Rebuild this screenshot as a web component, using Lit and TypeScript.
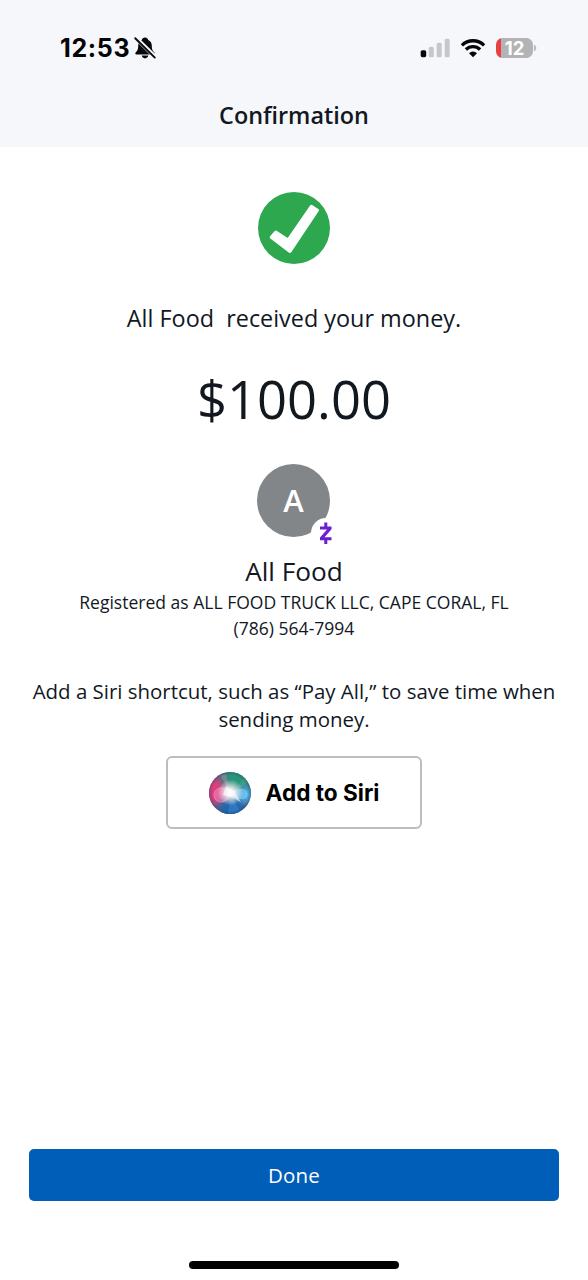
import { LitElement, html, css } from "lit";
import { customElement, property } from "lit/decorators.js";

@customElement("status-bar")
class StatusBar extends LitElement {
  @property() time = "12:53";
  @property() battery = "12";

  static styles = css`
    :host {
      display: flex;
      justify-content: space-between;
      align-items: center;
      height: 96px;
      padding: 0 51px 0 60px;
      box-sizing: border-box;
      font-family: Inter, "Liberation Sans", sans-serif;
    }
    .left,
    .right {
      display: flex;
      align-items: center;
    }
    .time {
      font-size: 25px;
      line-height: 32px;
      font-weight: 750;
      letter-spacing: 0.65px;
      color: #050507;
    }
    .bell {
      margin-left: 3px;
    }
    .wifi {
      margin-left: 10px;
    }
    .battery {
      display: flex;
      align-items: center;
      margin-left: 10px;
    }
    .cell {
      width: 37px;
      height: 20px;
      border-radius: 6.5px;
      background: linear-gradient(90deg, #e9403f 0 5px, #b3b3b5 5px);
      color: #fff;
      font-size: 18.5px;
      line-height: 20px;
      font-weight: 750;
      text-align: center;
    }
    svg {
      display: block;
    }
  `;

  render() {
    return html`
      <div class="left">
        <span class="time">${this.time}</span>
        <svg class="bell" width="24" height="24" viewBox="0 0 24 24">
          <path
            d="M12 1.6c-1.7 0-2.9 1-3.2 2.3C6.300 4.900 5.200 7.100 5.200 9.700c0 3.900-1 5.100-2.400 6.500-.9.900-.6 2.300.8 2.300h16.800c1.400 0 1.700-1.400.8-2.300-1.400-1.400-2.400-2.600-2.400-6.500 0-2.600-1.100-4.800-3.600-5.800C14.900 2.600 13.700 1.600 12 1.600z"
            fill="#08080a"
          />
          <path d="M8.800 19.600h6.400c-.2 1.700-1.500 2.800-3.200 2.800s-3-1.100-3.200-2.800z" fill="#08080a" />
          <path d="M2.700 1.800L22.500 21.300" stroke="#f5f7fb" stroke-width="4.200" />
          <path d="M2.200 2.200L21.800 21.600" stroke="#08080a" stroke-width="1.900" stroke-linecap="round" />
        </svg>
      </div>
      <div class="right">
        <svg width="30" height="20" viewBox="0 0 30 20">
          <rect x="0.700" y="12.200" width="5.500" height="7" rx="1.600" fill="#050507" />
          <rect x="8.800" y="8.700" width="5" height="10.500" rx="1.500" fill="#c6c7ca" />
          <rect x="16.700" y="4.700" width="5" height="14.500" rx="1.500" fill="#c6c7ca" />
          <rect x="24.700" y="0.700" width="5" height="18.500" rx="1.500" fill="#c6c7ca" />
        </svg>
        <svg class="wifi" width="26" height="20" viewBox="0 0 26 20">
          <g fill="none" stroke="#050507" stroke-width="3.300">
            <path d="M1.900 7.300a15.800 15.800 0 0 1 22.200 0" />
            <path d="M5.900 11.500a10.100 10.100 0 0 1 14.200 0" />
          </g>
          <path d="M9 15.200a5.700 5.700 0 0 1 8 0L13 19.200z" fill="#050507" />
        </svg>
        <div class="battery">
          <div class="cell">${this.battery}</div>
          <svg width="4" height="8" viewBox="0 0 4 8">
            <path d="M1 .8C2.500 1.400 3.300 2.600 3.300 4S2.500 6.600 1 7.200z" fill="#b9babd" />
          </svg>
        </div>
      </div>
    `;
  }
}

@customElement("siri-orb")
class SiriOrb extends LitElement {
  static styles = css`
    :host,
    svg {
      display: block;
    }
  `;

  render() {
    return html`
      <svg width="44" height="44" viewBox="0 0 44 44">
        <defs>
          <clipPath id="disc"><circle cx="22" cy="22" r="21" /></clipPath>
          <radialGradient id="pink"><stop offset="0.400" stop-color="#dc3f7c" /><stop offset="1" stop-color="#dc3f7c" stop-opacity="0" /></radialGradient>
          <radialGradient id="green"><stop offset="0.300" stop-color="#28967a" /><stop offset="1" stop-color="#28967a" stop-opacity="0" /></radialGradient>
          <radialGradient id="blue"><stop offset="0.300" stop-color="#1668b4" /><stop offset="1" stop-color="#1668b4" stop-opacity="0" /></radialGradient>
          <radialGradient id="cyan"><stop offset="0.200" stop-color="#4bb0e6" /><stop offset="1" stop-color="#4bb0e6" stop-opacity="0" /></radialGradient>
          <radialGradient id="glow"><stop offset="0" stop-color="#fff" /><stop offset="0.300" stop-color="#fff" stop-opacity="0.850" /><stop offset="1" stop-color="#fff" stop-opacity="0" /></radialGradient>
          <radialGradient id="rim"><stop offset="0.840" stop-color="#23415f" stop-opacity="0" /><stop offset="1" stop-color="#23415f" stop-opacity="0.400" /></radialGradient>
        </defs>
        <g clip-path="url(#disc)">
          <rect width="44" height="44" fill="#56628c" />
          <circle cx="4" cy="20" r="20" fill="url(#pink)" />
          <circle cx="30" cy="6" r="21" fill="url(#green)" />
          <circle cx="25" cy="41" r="20" fill="url(#blue)" />
          <circle cx="38" cy="24" r="12" fill="url(#cyan)" />
          <path d="M23 23L12 4l6-1z" fill="#e9b7b7" opacity="0.250" />
          <path d="M23 23L37 6l4 5z" fill="#bff0dc" opacity="0.120" />
          <path d="M23 23L20 43l12-3z" fill="#a9d8ff" opacity="0.150" />
          <path d="M23 21C17 14 6 16 6 24s11 11 17 0z" fill="#f39bc9" fill-opacity="0.450" stroke="#f6b3d6" stroke-opacity="0.600" stroke-width="0.700" />
          <path d="M24 22c6-5 15-5 15 1s-8 7-15-1z" fill="#7fd0f5" fill-opacity="0.500" stroke="#a6e6fa" stroke-opacity="0.500" stroke-width="0.700" />
          <circle cx="22.500" cy="21.500" r="13" fill="url(#glow)" />
          <path d="M18 15l8 5 7 11-10-5-8-2z" fill="#fff" opacity="0.550" />
          <circle cx="22" cy="22" r="21" fill="url(#rim)" />
        </g>
      </svg>
    `;
  }
}

@customElement("app-root")
class AppRoot extends LitElement {
  static styles = css`
    :host {
      display: flex;
      flex-direction: column;
      height: 1280px;
      box-sizing: border-box;
      background: #fff;
      color: #12181f;
      font-family: "Open Sans", "Noto Sans", sans-serif;
    }
    svg {
      display: block;
    }
    .header {
      height: 147px;
      background: #f5f7fb;
    }
    .title {
      margin: 0;
      text-align: center;
      font-size: 23.4px;
      line-height: 38px;
      font-weight: 550;
    }
    .content {
      flex: 1;
      display: flex;
      flex-direction: column;
      align-items: center;
      padding-top: 44px;
    }
    .message {
      margin: 36px 0 0;
      font-size: 23.4px;
      line-height: 34px;
      white-space: pre;
    }
    .amount {
      margin: 28px 0 0;
      font-size: 52.5px;
      line-height: 72px;
    }
    .avatar {
      position: relative;
      width: 73px;
      height: 73px;
      margin: 29px 1px 0 0;
      border-radius: 50%;
      background: #828689;
      color: #fff;
      font-size: 31px;
      line-height: 73px;
      font-weight: 600;
      text-align: center;
    }
    .badge {
      position: absolute;
      left: 53px;
      top: 53px;
    }
    .name {
      margin: 16px 0 0;
      font-size: 26.2px;
      line-height: 36px;
      font-weight: 400;
    }
    .detail {
      margin: 0;
      font-size: 17.55px;
      line-height: 26px;
    }
    .hint {
      width: 540px;
      margin: 36px 0 0;
      text-align: center;
      font-size: 20.45px;
      line-height: 28px;
    }
    .siri {
      display: flex;
      align-items: center;
      justify-content: center;
      gap: 14px;
      width: 256px;
      height: 73px;
      margin-top: 23px;
      padding: 0 1px 0 0;
      box-sizing: border-box;
      border: 2px solid #bdbdbd;
      border-radius: 6px;
      background: #fff;
      color: #000;
      font: 700 22.6px/28px Inter, "Liberation Sans", sans-serif;
    }
    .footer {
      display: flex;
      flex-direction: column;
      align-items: center;
      padding: 0 29px 11px;
    }
    .done {
      align-self: stretch;
      height: 52px;
      border: 0;
      border-radius: 5px;
      background: #005eb8;
      color: #fff;
      font: 500 20.5px/28px "Open Sans", "Noto Sans", sans-serif;
      letter-spacing: 0.2px;
    }
    .home {
      width: 210px;
      height: 8px;
      margin-top: 60px;
      border-radius: 4px;
      background: #000;
    }
  `;

  render() {
    return html`
      <header class="header">
        <status-bar></status-bar>
        <h1 class="title">Confirmation</h1>
      </header>
      <main class="content">
        <svg width="74" height="74" viewBox="0 0 74 74">
          <circle cx="37" cy="37" r="36" fill="#2ea84f" />
          <path d="M14.200 46.300L18.800 41L31 49L54.300 15.300L60.500 19.200L33 60.500Z" fill="#fff" stroke="#fff" stroke-width="3" stroke-linejoin="round" />
        </svg>
        <p class="message">All Food  received your money.</p>
        <p class="amount">$100.00</p>
        <div class="avatar">
          A
          <svg class="badge" width="32" height="32" viewBox="0 0 32 32">
            <circle cx="16" cy="16" r="15" fill="#fff" />
            <path d="M10 9.500h11.500v2.700l-7 8.100h7v3H10v-2.800l7-8H10z" fill="#6a1fd0" />
            <path d="M15.800 5.500v5M15.800 22v5" stroke="#6a1fd0" stroke-width="3" />
          </svg>
        </div>
        <h2 class="name">All Food</h2>
        <p class="detail">Registered as ALL FOOD TRUCK LLC, CAPE CORAL, FL</p>
        <p class="detail">(786) 564-7994</p>
        <p class="hint">Add a Siri shortcut, such as “Pay All,” to save time when sending money.</p>
        <button class="siri"><siri-orb></siri-orb><span>Add to Siri</span></button>
      </main>
      <footer class="footer">
        <button class="done">Done</button>
        <div class="home"></div>
      </footer>
    `;
  }
}
